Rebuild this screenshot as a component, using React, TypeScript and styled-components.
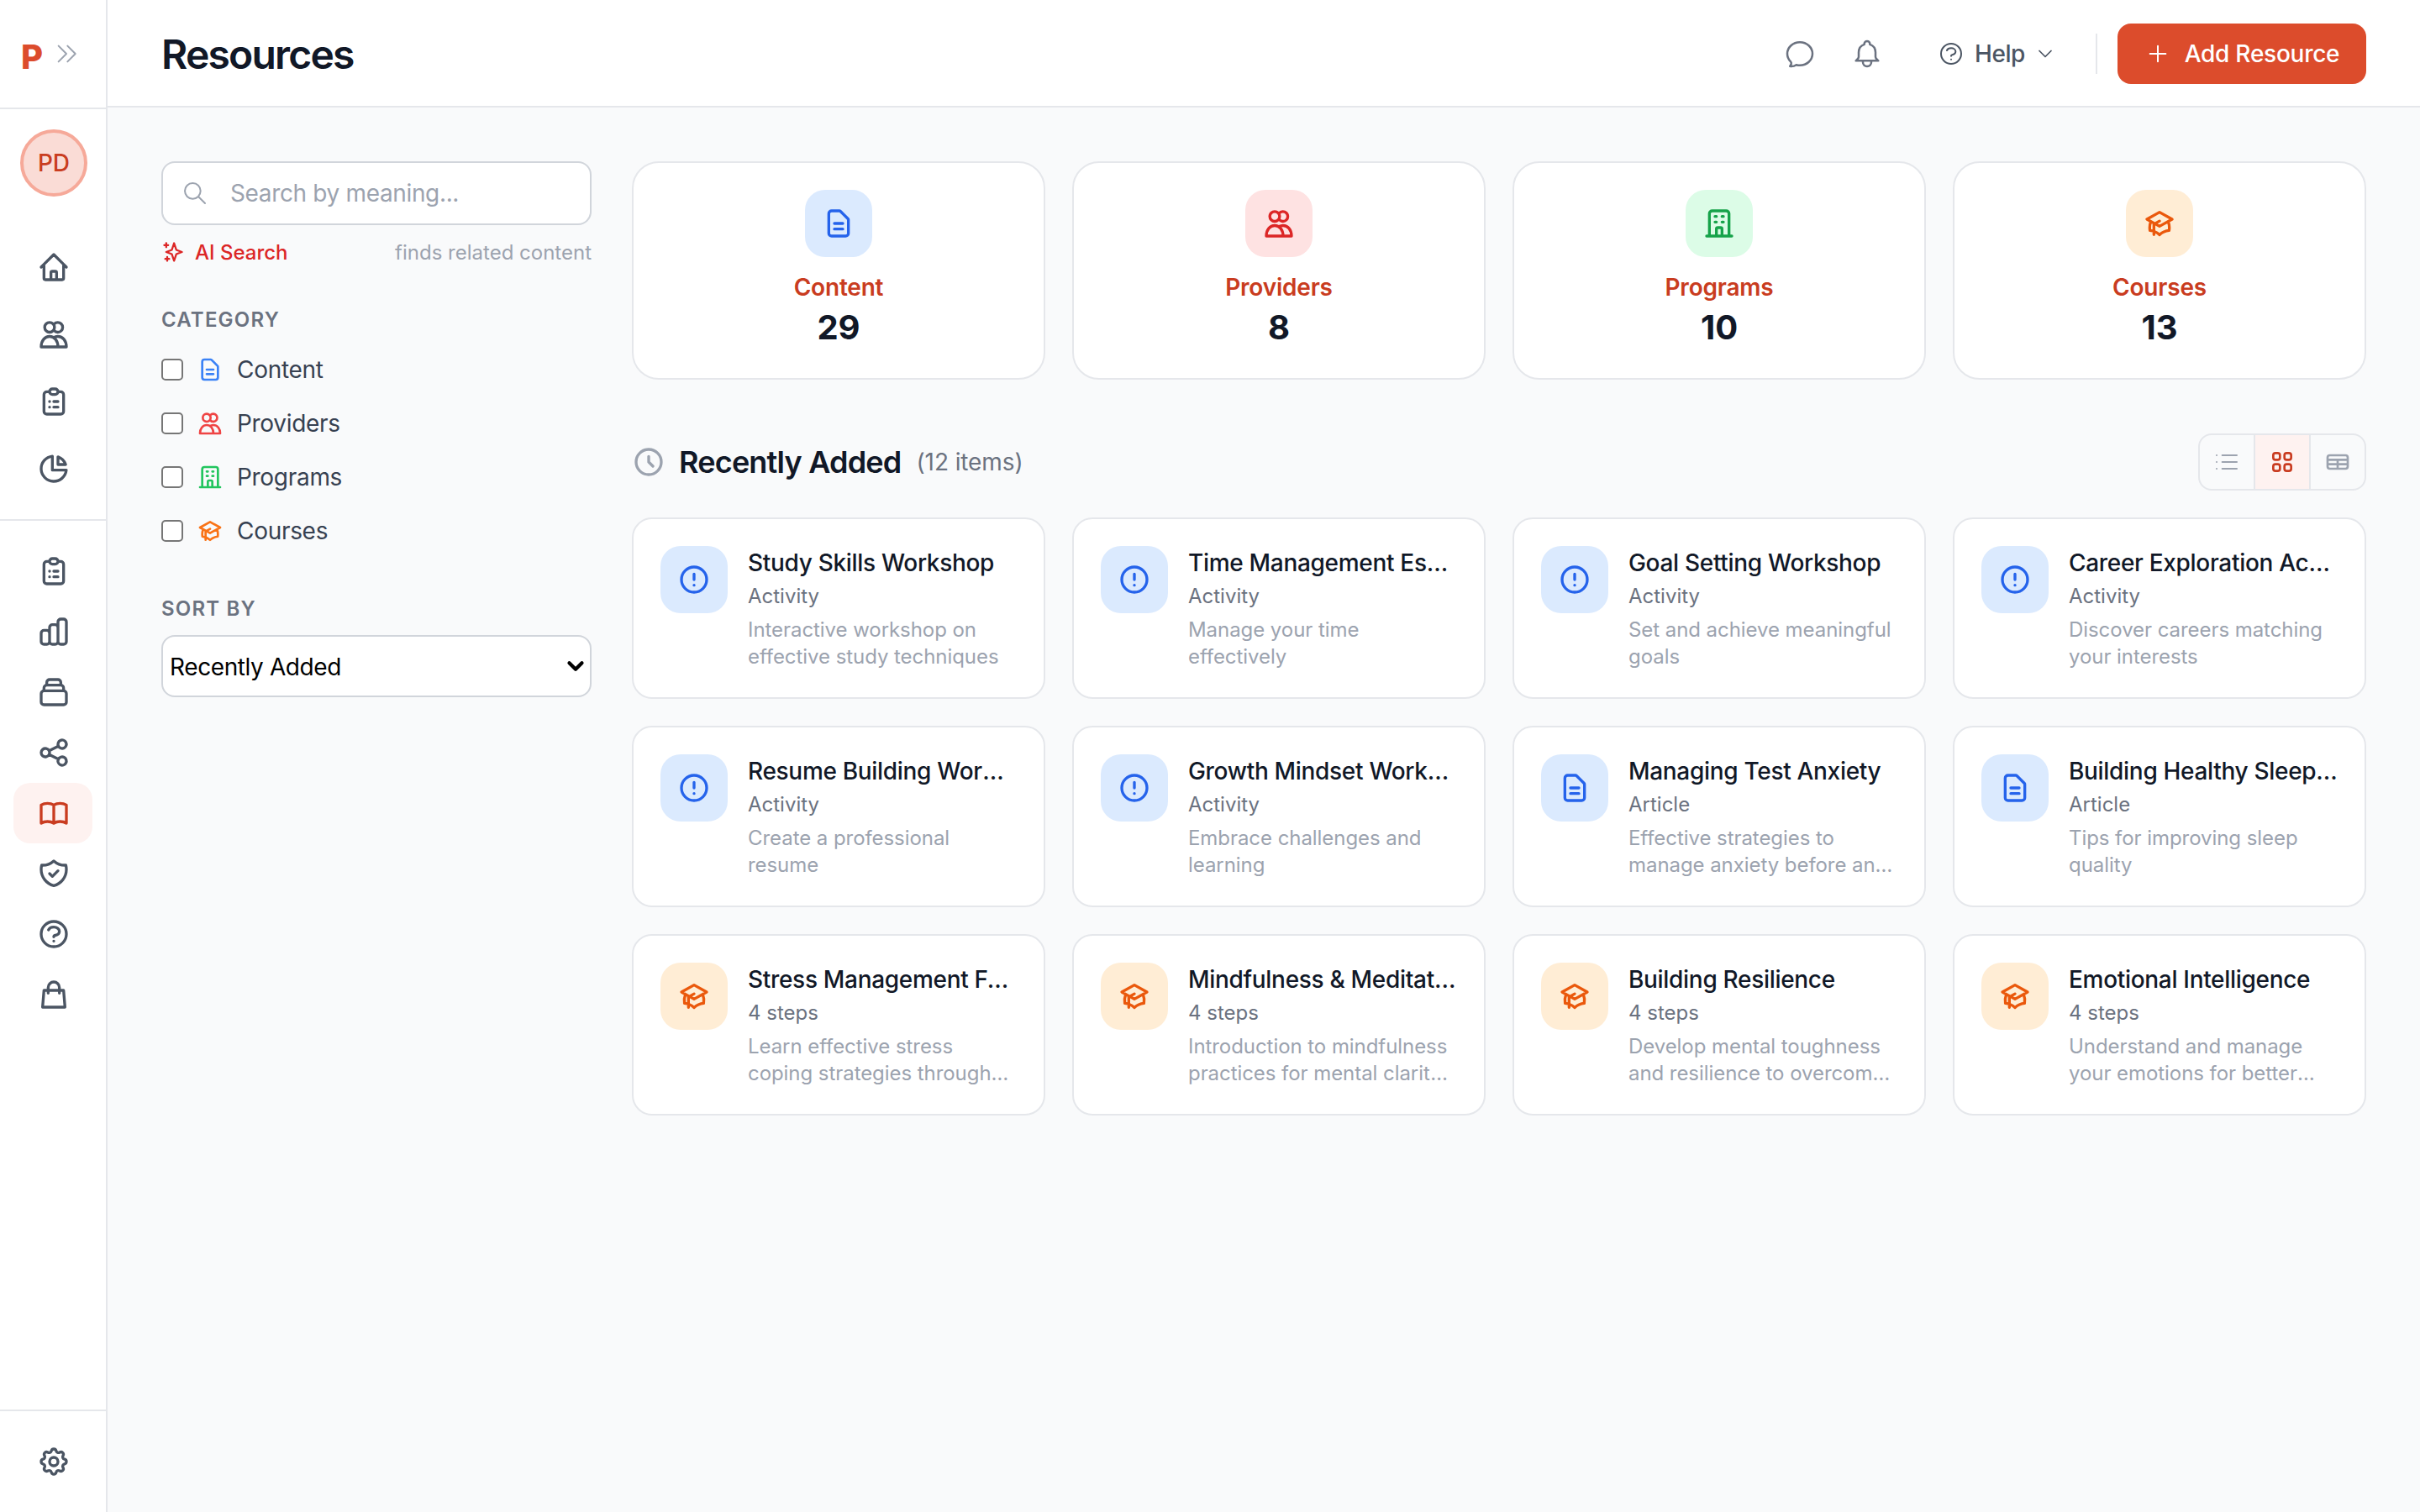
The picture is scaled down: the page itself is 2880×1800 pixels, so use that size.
import React from "react";
import styled, { createGlobalStyle } from "styled-components";

const Global = createGlobalStyle`
  html, body { margin: 0; padding: 0; background: #f9fafb; }
  * { box-sizing: border-box; }
  body { font-family: Inter, "Liberation Sans", sans-serif; color: #111827; -webkit-font-smoothing: antialiased; }
`;

const P = {
  home: "M3 12l2-2m0 0l7-7 7 7M5 10v10a1 1 0 001 1h3m10-11l2 2m-2-2v10a1 1 0 01-1 1h-3m-6 0a1 1 0 001-1v-4a1 1 0 011-1h2a1 1 0 011 1v4a1 1 0 001 1m-6 0h6",
  users: "M3 21h18M3 21c0-4.5 2.7-7.5 6-7.5s6 3 6 7.5M12.6 14c1-.4 1.700-.5 2.400-.5 3.300 0 6 3 6 7.500M12.500 7a3.500 3.500 0 11-7 0 3.500 3.500 0 017 0zM12.300 4.600A3.500 3.500 0 1112.300 9.400",
  clipboard: "M9 5H7a2 2 0 00-2 2v12a2 2 0 002 2h10a2 2 0 002-2V7a2 2 0 00-2-2h-2M9 5a2 2 0 002 2h2a2 2 0 002-2M9 5a2 2 0 012-2h2a2 2 0 012 2m-3 7h3m-3 4h3m-6-4h.01M9 16h.01",
  pie: "M11 3.055A9.001 9.001 0 1020.945 13H11V3.055zM20.488 9H15V3.512A9.025 9.025 0 0120.488 9z",
  bars: "M9 19v-6a2 2 0 00-2-2H5a2 2 0 00-2 2v6a2 2 0 002 2h2a2 2 0 002-2zm0 0V9a2 2 0 012-2h2a2 2 0 012 2v10m-6 0a2 2 0 002 2h2a2 2 0 002-2m0 0V5a2 2 0 012-2h2a2 2 0 012 2v14a2 2 0 01-2 2h-2a2 2 0 01-2-2z",
  collection: "M19 11H5m14 0a2 2 0 012 2v6a2 2 0 01-2 2H5a2 2 0 01-2-2v-6a2 2 0 012-2m14 0V9a2 2 0 00-2-2M5 11V9a2 2 0 012-2m0 0V5a2 2 0 012-2h6a2 2 0 012 2v2M7 7h10",
  share: "M8.684 13.342C8.886 12.938 9 12.482 9 12c0-.482-.114-.938-.316-1.342m0 2.684a3 3 0 110-2.684m0 2.684l6.632 3.316m-6.632-6l6.632-3.316m0 0a3 3 0 105.367-2.684 3 3 0 00-5.367 2.684zm0 9.316a3 3 0 105.368 2.684 3 3 0 00-5.368-2.684z",
  book: "M12 6.253v13m0-13C10.832 5.477 9.246 5 7.5 5S4.168 5.477 3 6.253v13C4.168 18.477 5.754 18 7.5 18s3.332.477 4.5 1.253m0-13C13.168 5.477 14.754 5 16.500 5c1.747 0 3.332.477 4.500 1.253v13C19.832 18.477 18.247 18 16.500 18c-1.746 0-3.332.477-4.500 1.253",
  shield: "M9 12l2 2 4-4m5.618-4.016A11.955 11.955 0 0112 2.944a11.955 11.955 0 01-8.618 3.040A12.020 12.020 0 003 9c0 5.591 3.824 10.290 9 11.622 5.176-1.332 9-6.030 9-11.622 0-1.042-.133-2.052-.382-3.016z",
  question: "M8.228 9c.549-1.165 2.030-2 3.772-2 2.210 0 4 1.343 4 3 0 1.400-1.278 2.575-3.006 2.907-.542.104-.994.540-.994 1.093m0 3h.01M21 12a9 9 0 11-18 0 9 9 0 0118 0z",
  bag: "M16 11V7a4 4 0 00-8 0v4M5 9h14l1 12H4L5 9z",
  cog: "M10.325 4.317c.426-1.756 2.924-1.756 3.350 0a1.724 1.724 0 002.573 1.066c1.543-.940 3.310.826 2.370 2.370a1.724 1.724 0 001.065 2.572c1.756.426 1.756 2.924 0 3.350a1.724 1.724 0 00-1.066 2.573c.940 1.543-.826 3.310-2.370 2.370a1.724 1.724 0 00-2.572 1.065c-.426 1.756-2.924 1.756-3.350 0a1.724 1.724 0 00-2.573-1.066c-1.543.940-3.310-.826-2.370-2.370a1.724 1.724 0 00-1.065-2.572c-1.756-.426-1.756-2.924 0-3.350a1.724 1.724 0 001.066-2.573c-.940-1.543.826-3.310 2.370-2.370.996.608 2.296.070 2.572-1.065zM15 12a3 3 0 11-6 0 3 3 0 016 0z",
  doc: "M9 12h6m-6 4h6m2 5H7a2 2 0 01-2-2V5a2 2 0 012-2h5.586a1 1 0 01.707.293l5.414 5.414a1 1 0 01.293.707V19a2 2 0 01-2 2z",
  building: "M19 21V5a2 2 0 00-2-2H7a2 2 0 00-2 2v16m14 0h2m-2 0h-5m-9 0H3m2 0h5M9 7h1m-1 4h1m4-4h1m-1 4h1m-5 10v-5a1 1 0 011-1h2a1 1 0 011 1v5m-4 0h4",
  cap: "M12 14l9-5-9-5-9 5 9 5zm0 0l6.160-3.422a12.083 12.083 0 01.665 6.479A11.952 11.952 0 0012 20.055a11.952 11.952 0 00-6.824-2.998 12.078 12.078 0 01.665-6.479L12 14zm-4 6v-7.500l4-2.222",
  alert: "M12 8v4m0 4h.01M21 12a9 9 0 11-18 0 9 9 0 0118 0z",
  clock: "M12 8v4l3 3m6-3a9 9 0 11-18 0 9 9 0 0118 0z",
  search: "M21 21l-6-6m2-5a7 7 0 11-14 0 7 7 0 0114 0z",
  bell: "M15 17h5l-1.405-1.405A2.032 2.032 0 0118 14.158V11a6.002 6.002 0 00-4-5.659V5a2 2 0 10-4 0v.341C7.670 6.165 6 8.388 6 11v3.159c0 .538-.214 1.055-.595 1.436L4 17h5m6 0v1a3 3 0 11-6 0v-1m6 0H9",
  chat: "M12 20.250c4.970 0 9-3.694 9-8.250s-4.030-8.250-9-8.250S3 7.444 3 12c0 2.104.859 4.023 2.273 5.480.432.447.740 1.040.586 1.641a4.483 4.483 0 01-.923 1.785A5.969 5.969 0 006 21c1.282 0 2.470-.402 3.445-1.087.810.220 1.668.337 2.555.337z",
  plus: "M5 12h14M12 5v14",
  chevDown: "M6 9l6 6 6-6",
  chevDouble: "M13 5l7 7-7 7M5 5l7 7-7 7",
  sparkles: "M5 3v4M3 5h4M6 17v4M4 19h4M13 3l2.286 6.857L21 12l-5.714 2.143L13 21l-2.286-6.857L5 12l5.714-2.143L13 3z",
  list: "M8 6h13M8 12h13M8 18h13M3 6h.01M3 12h.01M3 18h.01",
  grid: "M4 6a2 2 0 012-2h2a2 2 0 012 2v2a2 2 0 01-2 2H6a2 2 0 01-2-2V6zM14 6a2 2 0 012-2h2a2 2 0 012 2v2a2 2 0 01-2 2h-2a2 2 0 01-2-2V6zM4 16a2 2 0 012-2h2a2 2 0 012 2v2a2 2 0 01-2 2H6a2 2 0 01-2-2v-2zM14 16a2 2 0 012-2h2a2 2 0 012 2v2a2 2 0 01-2 2h-2a2 2 0 01-2-2v-2z",
  table: "M3 10h18M3 14h18m-9-4v8m-7 0h14a2 2 0 002-2V8a2 2 0 00-2-2H5a2 2 0 00-2 2v8a2 2 0 002 2z",
};

type IconName = keyof typeof P;

const Svg = styled.svg<{ $size: number; $color: string }>`
  width: ${(p) => p.$size}px;
  height: ${(p) => p.$size}px;
  color: ${(p) => p.$color};
  flex: none;
  display: block;
`;

const Icon = ({ name, size = 40, color = "#4b5563", stroke = 2 }: { name: IconName; size?: number; color?: string; stroke?: number }) => (
  <Svg $size={size} $color={color} viewBox="0 0 24 24" fill="none" stroke="currentColor" strokeWidth={stroke} strokeLinecap="round" strokeLinejoin="round">
    <path d={P[name]} />
  </Svg>
);

const Shell = styled.div`
  display: flex;
  min-height: 100vh;
  background: #f9fafb;
`;

const Sidebar = styled.aside`
  width: 128px;
  flex: none;
  display: flex;
  flex-direction: column;
  background: #fff;
  box-shadow: inset -2px 0 0 #e5e7eb;
`;

const LogoRow = styled.div`
  height: 130px;
  flex: none;
  display: flex;
  align-items: flex-start;
  padding: 48px 0 0 25px;
  margin-right: 2px;
  gap: 16px;
  border-bottom: 2px solid #e5e7eb;
`;

const Logo = styled.span`
  font-size: 40px;
  line-height: 40px;
  font-weight: 800;
  color: #dc4c2c;
  width: 25px;
`;

const LogoChevron = styled.span`
  display: block;
  margin: 0 0 0 -3px;
`;

const AvatarWrap = styled.div`
  display: flex;
  justify-content: center;
  padding: 24px 0 48px;
`;

const Avatar = styled.div`
  width: 80px;
  height: 80px;
  border-radius: 50%;
  background: #fadcd6;
  border: 4px solid #f6a999;
  color: #c93c20;
  font-size: 28px;
  font-weight: 500;
  display: flex;
  align-items: center;
  justify-content: center;
`;

const NavGroup = styled.nav<{ $gap: number }>`
  display: flex;
  flex-direction: column;
  gap: ${(p) => p.$gap}px;
  padding: 0 18px 0 16px;
`;

const FirstGroup = styled(NavGroup)`
  padding-bottom: 24px;
  border-bottom: 2px solid #e5e7eb;
  margin-right: 2px;
  padding-right: 16px;
`;

const SecondGroup = styled(NavGroup)`
  padding-top: 24px;
  flex: 1;
`;

const NavItem = styled.div<{ $active?: boolean }>`
  height: 72px;
  border-radius: 20px;
  padding-left: 2px;
  display: flex;
  align-items: center;
  justify-content: center;
  background: ${(p) => (p.$active ? "#fef2f0" : "transparent")};
`;

const SidebarFoot = styled.div`
  border-top: 2px solid #e5e7eb;
  margin-right: 2px;
  padding-left: 2px;
  height: 122px;
  display: flex;
  align-items: center;
  justify-content: center;
`;

const Main = styled.div`
  flex: 1;
  min-width: 0;
  display: flex;
  flex-direction: column;
`;

const Header = styled.header`
  height: 128px;
  flex: none;
  background: #fff;
  border-bottom: 2px solid #e5e7eb;
  display: flex;
  align-items: center;
  padding: 0 64px;
`;

const Title = styled.h1`
  margin: 3px 0 0;
  font-size: 48px;
  line-height: 64px;
  font-weight: 600;
  letter-spacing: -1.8px;
  color: #111827;
`;

const HeaderActions = styled.div`
  margin: 2px 0 0 auto;
  display: flex;
  align-items: center;
`;

const HeaderIcon = styled.span<{ $mr: number }>`
  display: block;
  margin-right: ${(p) => p.$mr}px;
`;

const HelpButton = styled.div`
  display: flex;
  align-items: center;
  font-size: 28px;
  font-weight: 500;
  letter-spacing: -0.4px;
  color: #4b5563;
  margin-right: 46px;
`;

const HelpLabel = styled.span`
  margin: 0 10px 0 12px;
`;

const Divider = styled.div`
  width: 2px;
  height: 48px;
  background: #e5e7eb;
  margin-right: 24px;
`;

const AddButton = styled.button`
  height: 72px;
  width: 296px;
  border: 0;
  border-radius: 16px;
  background: #dc4c2c;
  color: #fff;
  font: 500 28px Inter, sans-serif;
  letter-spacing: -0.25px;
  display: flex;
  align-items: center;
  justify-content: center;
  gap: 16px;
`;

const Body = styled.div`
  display: flex;
  gap: 48px;
  padding: 64px;
`;

const Filters = styled.div`
  width: 512px;
  flex: none;
`;

const SearchBox = styled.div`
  height: 76px;
  background: #fff;
  border: 2px solid #d1d5db;
  border-radius: 16px;
  display: flex;
  align-items: center;
  padding: 0 22px;
  gap: 24px;
`;

const SearchInput = styled.input`
  flex: 1;
  min-width: 0;
  border: 0;
  outline: 0;
  background: transparent;
  font: 400 28px Inter, sans-serif;
  letter-spacing: -0.35px;
  color: #111827;
  &::placeholder { color: #9ca3af; opacity: 1; }
`;

const AiRow = styled.div`
  display: flex;
  align-items: center;
  height: 32px;
  margin-top: 16px;
`;

const AiLabel = styled.span`
  margin-left: 12px;
  font-size: 24px;
  font-weight: 500;
  color: #dc2626;
`;

const AiHint = styled.span`
  margin-left: auto;
  font-size: 24px;
  color: #9ca3af;
`;

const SectionLabel = styled.div<{ $mt: number }>`
  margin-top: ${(p) => p.$mt}px;
  font-size: 24px;
  line-height: 32px;
  font-weight: 600;
  letter-spacing: 1.2px;
  color: #6b7280;
`;

const CheckList = styled.div`
  margin-top: 27px;
  display: flex;
  flex-direction: column;
  gap: 32px;
`;

const CheckRow = styled.label`
  height: 32px;
  display: flex;
  align-items: center;
  font-size: 28px;
  letter-spacing: -0.3px;
  color: #374151;
`;

const Check = styled.input`
  appearance: none;
  width: 26px;
  height: 26px;
  margin: 0 16px 0 0;
  background: #fff;
  border: 2px solid #767676;
  border-radius: 5px;
`;

const CheckText = styled.span`
  margin-left: 16px;
`;

const SelectWrap = styled.div`
  position: relative;
  margin-top: 15px;
`;

const Select = styled.select`
  appearance: none;
  display: block;
  width: 100%;
  height: 74px;
  padding: 1px 8px 0;
  background: #fff;
  border: 2px solid #d1d5db;
  border-radius: 16px;
  font: 400 28px Inter, sans-serif;
  letter-spacing: -0.4px;
  color: #000;
`;

const SelectArrow = styled.span`
  position: absolute;
  right: 4px;
  top: 22px;
  pointer-events: none;
`;

const Content = styled.div`
  flex: 1;
  min-width: 0;
`;

const Grid = styled.div`
  display: grid;
  grid-template-columns: repeat(4, minmax(0, 1fr));
  gap: 32px;
`;

const StatCard = styled.div`
  height: 260px;
  background: #fff;
  border: 2px solid #e5e7eb;
  border-radius: 32px;
  padding: 32px;
  display: flex;
  flex-direction: column;
  align-items: center;
`;

const IconBox = styled.div<{ $bg: string }>`
  width: 80px;
  height: 80px;
  flex: none;
  border-radius: 24px;
  background: ${(p) => p.$bg};
  display: flex;
  align-items: center;
  justify-content: center;
`;

const StatLabel = styled.div`
  margin-top: 16px;
  font-size: 28px;
  line-height: 40px;
  font-weight: 600;
  letter-spacing: -0.2px;
  color: #c93c20;
`;

const StatValue = styled.div`
  font-size: 40px;
  line-height: 56px;
  font-weight: 700;
  color: #111827;
`;

const SectionHead = styled.div`
  margin: 64px 0 32px;
  height: 68px;
  display: flex;
  align-items: center;
`;

const SectionTitle = styled.h2`
  margin: 0 0 1px 16px;
  font-size: 36px;
  font-weight: 600;
  letter-spacing: -0.8px;
  color: #111827;
`;

const SectionCount = styled.span`
  margin-left: 18px;
  font-size: 28px;
  letter-spacing: -0.1px;
  color: #6b7280;
`;

const Toggle = styled.div`
  margin-left: auto;
  display: flex;
  border: 2px solid #e5e7eb;
  border-radius: 16px;
  overflow: hidden;
  background: #f9fafb;
`;

const ToggleBtn = styled.div<{ $active?: boolean }>`
  width: 66px;
  height: 64px;
  display: flex;
  align-items: center;
  justify-content: center;
  background: ${(p) => (p.$active ? "#fef2f0" : "transparent")};
  & + & { border-left: 2px solid #e5e7eb; }
  &:first-child { width: 64px; }
  &:last-child { width: 66px; }
`;

const ResourceCard = styled.div`
  height: 216px;
  background: #fff;
  border: 2px solid #e5e7eb;
  border-radius: 24px;
  padding: 32px;
  display: flex;
  gap: 24px;
`;

const ResourceBody = styled.div`
  flex: 1;
  min-width: 0;
`;

const ResourceTitle = styled.div`
  font-size: 28px;
  line-height: 40px;
  font-weight: 500;
  letter-spacing: -0.31px;
  color: #111827;
  white-space: nowrap;
  overflow: hidden;
  text-overflow: ellipsis;
`;

const ResourceSub = styled.div`
  margin-top: 4px;
  font-size: 24px;
  line-height: 32px;
  color: #6b7280;
`;

const ResourceDesc = styled.div`
  margin-top: 8px;
  font-size: 24px;
  line-height: 32px;
  letter-spacing: -0.06px;
  color: #9ca3af;
  display: -webkit-box;
  -webkit-box-orient: vertical;
  -webkit-line-clamp: 2;
  overflow: hidden;
`;

const KINDS = {
  content: { icon: "doc" as IconName, bg: "#dbeafe", fg: "#2563eb", soft: "#3b82f6" },
  providers: { icon: "users" as IconName, bg: "#fee2e2", fg: "#dc2626", soft: "#ef4444" },
  programs: { icon: "building" as IconName, bg: "#dcfce7", fg: "#16a34a", soft: "#22c55e" },
  courses: { icon: "cap" as IconName, bg: "#ffedd5", fg: "#ea580c", soft: "#f97316" },
};

const ACTIVITY = { icon: "alert" as IconName, bg: "#dbeafe", fg: "#2563eb" };

const STATS = [
  { label: "Content", value: 29, k: KINDS.content },
  { label: "Providers", value: 8, k: KINDS.providers },
  { label: "Programs", value: 10, k: KINDS.programs },
  { label: "Courses", value: 13, k: KINDS.courses },
];

const RESOURCES = [
  { t: "Study Skills Workshop", s: "Activity", d: "Interactive workshop on effective study techniques", k: ACTIVITY },
  { t: "Time Management Essentials", s: "Activity", d: "Manage your time effectively", k: ACTIVITY },
  { t: "Goal Setting Workshop", s: "Activity", d: "Set and achieve meaningful goals", k: ACTIVITY },
  { t: "Career Exploration Activity", s: "Activity", d: "Discover careers matching your interests", k: ACTIVITY },
  { t: "Resume Building Workshop", s: "Activity", d: "Create a professional resume", k: ACTIVITY },
  { t: "Growth Mindset Workshop", s: "Activity", d: "Embrace challenges and learning", k: ACTIVITY },
  { t: "Managing Test Anxiety", s: "Article", d: "Effective strategies to manage anxiety before and during exams", k: KINDS.content },
  { t: "Building Healthy Sleep Habits", s: "Article", d: "Tips for improving sleep quality", k: KINDS.content },
  { t: "Stress Management Fundamentals", s: "4 steps", d: "Learn effective stress coping strategies through practical techniques", k: KINDS.courses },
  { t: "Mindfulness & Meditation", s: "4 steps", d: "Introduction to mindfulness practices for mental clarity and focus", k: KINDS.courses },
  { t: "Building Resilience", s: "4 steps", d: "Develop mental toughness and resilience to overcome challenges", k: KINDS.courses },
  { t: "Emotional Intelligence", s: "4 steps", d: "Understand and manage your emotions for better relationships", k: KINDS.courses },
];

const NAV_TOP: IconName[] = ["home", "users", "clipboard", "pie"];
const NAV_BOTTOM: IconName[] = ["clipboard", "bars", "collection", "share", "book", "shield", "question", "bag"];

export default function App() {
  return (
    <Shell>
      <Global />
      <Sidebar>
        <LogoRow>
          <Logo>P</Logo>
          <LogoChevron><Icon name="chevDouble" size={32} color="#9ca3af" stroke={1.5} /></LogoChevron>
        </LogoRow>
        <AvatarWrap><Avatar>PD</Avatar></AvatarWrap>
        <FirstGroup $gap={8}>
          {NAV_TOP.map((n) => (
            <NavItem key={n}><Icon name={n} /></NavItem>
          ))}
        </FirstGroup>
        <SecondGroup $gap={0}>
          {NAV_BOTTOM.map((n) => (
            <NavItem key={n} $active={n === "book"}>
              <Icon name={n} color={n === "book" ? "#c93c20" : "#4b5563"} />
            </NavItem>
          ))}
        </SecondGroup>
        <SidebarFoot><Icon name="cog" /></SidebarFoot>
      </Sidebar>
      <Main>
        <Header>
          <Title>Resources</Title>
          <HeaderActions>
            <HeaderIcon $mr={40}><Icon name="chat" color="#6b7280" stroke={1.5} /></HeaderIcon>
            <HeaderIcon $mr={64}><Icon name="bell" color="#6b7280" stroke={1.5} /></HeaderIcon>
            <HelpButton>
              <Icon name="question" size={32} color="#4b5563" stroke={1.5} />
              <HelpLabel>Help</HelpLabel>
              <Icon name="chevDown" size={28} color="#4b5563" stroke={1.5} />
            </HelpButton>
            <Divider />
            <AddButton>
              <Icon name="plus" size={32} color="#fff" stroke={1.5} />
              Add Resource
            </AddButton>
          </HeaderActions>
        </Header>
        <Body>
          <Filters>
            <SearchBox>
              <Icon name="search" size={32} color="#9ca3af" stroke={1.5} />
              <SearchInput placeholder="Search by meaning..." />
            </SearchBox>
            <AiRow>
              <Icon name="sparkles" size={28} color="#dc2626" />
              <AiLabel>AI Search</AiLabel>
              <AiHint>finds related content</AiHint>
            </AiRow>
            <SectionLabel $mt={49}>CATEGORY</SectionLabel>
            <CheckList>
              {STATS.map((s) => (
                <CheckRow key={s.label}>
                  <Check type="checkbox" />
                  <Icon name={s.k.icon} size={32} color={s.k.soft} />
                  <CheckText>{s.label}</CheckText>
                </CheckRow>
              ))}
            </CheckList>
            <SectionLabel $mt={61}>SORT BY</SectionLabel>
            <SelectWrap>
              <Select defaultValue="recent">
                <option value="recent">Recently Added</option>
              </Select>
              <SelectArrow>
                <Icon name="chevDown" size={30} color="#000" stroke={3.4} />
              </SelectArrow>
            </SelectWrap>
          </Filters>
          <Content>
            <Grid>
              {STATS.map((s) => (
                <StatCard key={s.label}>
                  <IconBox $bg={s.k.bg}><Icon name={s.k.icon} color={s.k.fg} /></IconBox>
                  <StatLabel>{s.label}</StatLabel>
                  <StatValue>{s.value}</StatValue>
                </StatCard>
              ))}
            </Grid>
            <SectionHead>
              <Icon name="clock" color="#9ca3af" />
              <SectionTitle>Recently Added</SectionTitle>
              <SectionCount>(12 items)</SectionCount>
              <Toggle>
                <ToggleBtn><Icon name="list" size={32} color="#9ca3af" stroke={1.5} /></ToggleBtn>
                <ToggleBtn $active><Icon name="grid" size={32} color="#c93c20" /></ToggleBtn>
                <ToggleBtn><Icon name="table" size={32} color="#9ca3af" /></ToggleBtn>
              </Toggle>
            </SectionHead>
            <Grid>
              {RESOURCES.map((r) => (
                <ResourceCard key={r.t}>
                  <IconBox $bg={r.k.bg}><Icon name={r.k.icon} color={r.k.fg} /></IconBox>
                  <ResourceBody>
                    <ResourceTitle>{r.t}</ResourceTitle>
                    <ResourceSub>{r.s}</ResourceSub>
                    <ResourceDesc>{r.d}</ResourceDesc>
                  </ResourceBody>
                </ResourceCard>
              ))}
            </Grid>
          </Content>
        </Body>
      </Main>
    </Shell>
  );
}
